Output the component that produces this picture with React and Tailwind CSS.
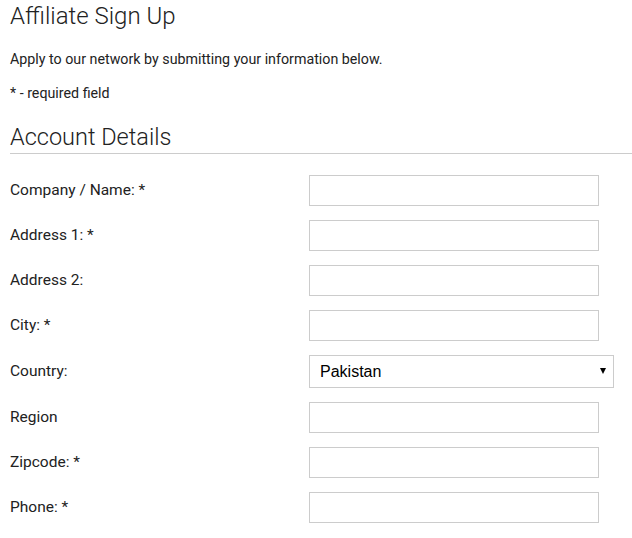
import React from "react";

const fields = [
  { label: "Company / Name: *" },
  { label: "Address 1: *" },
  { label: "Address 2:" },
  { label: "City: *" },
  { label: "Country:", select: true },
  { label: "Region" },
  { label: "Zipcode: *" },
  { label: "Phone: *" },
];

const Field = ({ label, select }) => (
  <div className="flex items-center">
    <label className="w-[299px] text-[15.5px] text-[#222]">{label}</label>
    {select ? (
      <div className="relative w-[305px] h-[33px] border border-[#ccc] bg-white flex items-center">
        <span className="pl-[10px] text-[16px] text-black font-['Liberation_Sans',Arial,sans-serif]">
          Pakistan
        </span>
        <span className="absolute right-[7px] top-[12px] w-0 h-0 border-l-[3px] border-r-[3px] border-t-[6px] border-l-transparent border-r-transparent border-t-black" />
      </div>
    ) : (
      <input className="w-[290px] h-[31px] border border-[#ccc] bg-white outline-none" />
    )}
  </div>
);

const App = () => {
  return (
    <div className="w-[632px] h-[538px] bg-white pl-[10px] font-['Roboto',sans-serif] text-[#222] overflow-hidden">
      <h1 className="text-[24px] font-light leading-[32px]">Affiliate Sign Up</h1>
      <p className="text-[14.25px] mt-[17px] leading-[20px]">
        Apply to our network by submitting your information below.
      </p>
      <p className="text-[14.25px] mt-[14px] leading-[20px]">* - required field</p>
      <h2 className="text-[23.5px] font-light leading-[32px] mt-[18px] border-b border-[#ccc]">
        Account Details
      </h2>
      <div className="flex flex-col gap-[14px] mt-[21px]">
        {fields.map((f) => (
          <Field key={f.label} {...f} />
        ))}
      </div>
    </div>
  );
};

export default App;
